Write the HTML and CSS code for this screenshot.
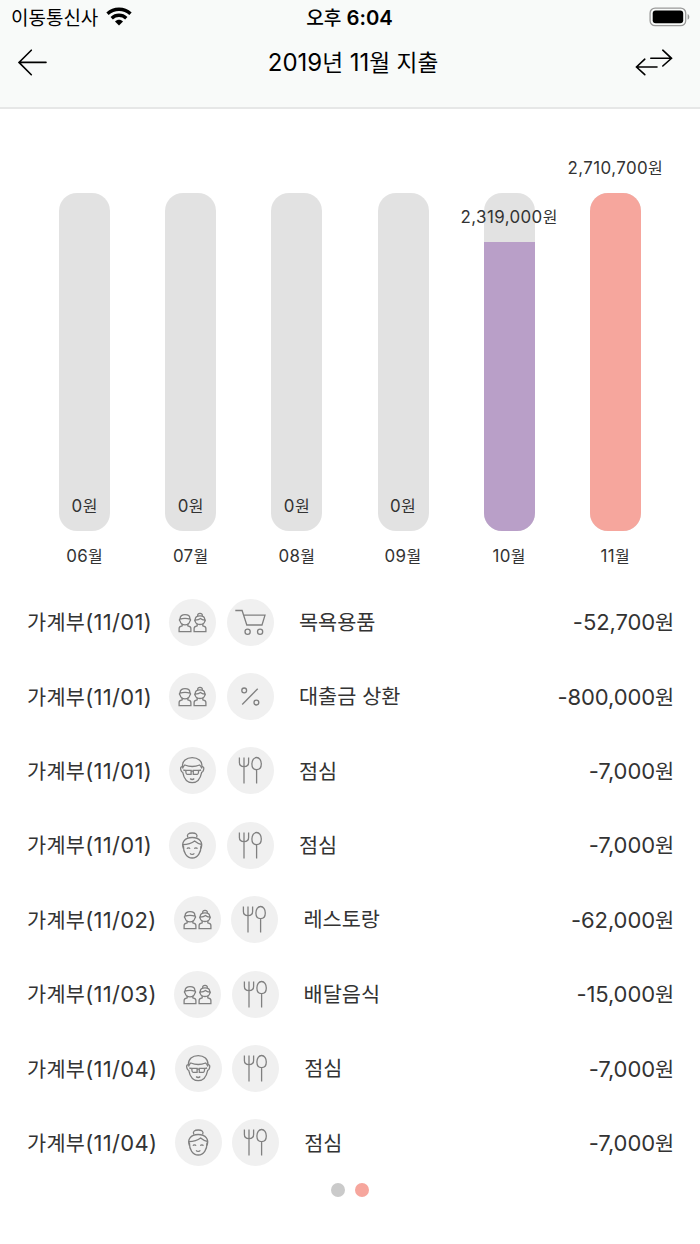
FILE: index.html
```html
<!DOCTYPE html>
<html lang="ko">
<head>
  <meta charset="UTF-8" />
  <meta name="viewport" content="width=device-width, initial-scale=1.0"/>
  <title>2019년 11월 지출</title>
  <link rel="stylesheet" href="styles.css">
</head>
<body>
  <!-- Shared icons -->
  <svg class="icon-defs" width="0" height="0">
    <symbol id="couple" viewBox="0 0 47 47">
      <path d="M11.100 19.900v-.5c0-2.400 2-3.700 4.900-3.700s4.900 1.300 4.900 3.700v.5c.9.300.9 1.900 0 2.200-.5 2.200-2.300 3.700-4.900 3.700s-4.400-1.500-4.900-3.700c-.9-.3-.9-1.900 0-2.200zM11.300 20.200c2-1 7.400-1 9.400 0"/>
      <path d="M13.200 24.700v2.100c-2.100.3-3.100 1-3.100 2.600v3.200h11.800v-3.200c0-1.600-1-2.300-3.100-2.600v-2.100"/>
      <path d="M26.200 20.700c0-2.500 2-3.800 4.800-3.800s4.800 1.300 4.800 3.800c.8.300.6 1.400 0 1.700-.5 2-2.300 3.100-4.800 3.100s-4.300-1.100-4.800-3.100c-.6-.3-.8-1.400 0-1.700zM26.300 21.200c2.600-.1 4.200-.8 5.200-1.700 1 .9 2.400 1.500 4.200 1.700"/>
      <path d="M28.800 17c-.5-1.600.4-2.600 2.200-2.600s2.700 1 2.200 2.600M28.200 24.700v2.100c-2.100.3-3.100 1-3.100 2.600v3.200h11.800v-3.200c0-1.600-1-2.300-3.100-2.600v-2.100"/>
    </symbol>
    <symbol id="cart" viewBox="0 0 47 47">
      <path d="M8.300 11.500h6.800L19.800 26H35l3-9.800H16.600"/>
      <circle cx="20.600" cy="32.700" r="2.600"/>
      <circle cx="33.100" cy="32.700" r="2.600"/>
    </symbol>
    <symbol id="percent" viewBox="0 0 47 47">
      <circle cx="17.200" cy="17.400" r="2.400"/>
      <circle cx="29.400" cy="29.600" r="2.400"/>
      <path d="M15.200 31.500l15.500-15.700"/>
    </symbol>
    <symbol id="man" viewBox="0 0 47 47">
      <path d="M13.400 20c-.3-6 4-9.400 9.800-9.400S33.300 14 33 20c1.700-.5 2.100 1 1.500 3-.4 1.400-1 2.300-1.800 2.400-1.200 6-4.700 10.300-9.500 10.300S14.900 31.400 13.700 25.400c-.8-.1-1.400-1-1.800-2.400-.6-2-.2-3.500 1.500-3z"/>
      <path d="M13.500 21.500c.5-1.500 1-2.700 2.300-3.500 4.500 1.800 10.300 1.800 14.800 0 1.300.8 1.800 2 2.300 3.500M14.300 23l2.500.6M32.100 23l-2.500.6"/>
      <path d="M16.800 23.300h5.300v4h-4c-1 0-1.300-1-1.300-4zM24.300 23.300h5.300c0 3-.3 4-1.300 4h-4zM22.100 24.200h2.200M21.200 31.500c1 1.300 3 1.300 4 0"/>
    </symbol>
    <symbol id="woman" viewBox="0 0 47 47">
      <path d="M18.800 15.500c-1.300-3 .6-4.500 4.400-4.500s5.700 1.500 4.400 4.500"/>
      <path d="M14.400 26.500c-2.200-5.800.9-11 8.800-11s11 5.200 8.800 11"/>
      <path d="M13.600 22.700c4.500-.1 9-1.200 12-3.700 2 1.700 4.500 3 7.200 3.500M14.400 23.500c-.2 7 3.300 12.500 8.800 12.500s9-5.500 8.800-12.500"/>
      <path d="M18 26.800c.5-1.200 2.500-1.200 3 0M25.400 26.800c.5-1.200 2.500-1.200 3 0M21.100 31.300c1 1.500 3.200 1.500 4.200 0"/>
    </symbol>
    <symbol id="meal" viewBox="0 0 47 47">
      <path d="M12.400 10.400v5.200c0 2.700 1.500 4.100 4.600 4.100s4.600-1.400 4.600-4.100v-5.200M17 10.400v26.200"/>
      <path d="M29.600 10.500c2.800 0 4.700 3 4.700 6.500s-1.900 5.600-4.700 5.600-4.700-2.100-4.700-5.600 1.900-6.500 4.700-6.500zM29.600 22.600v14"/>
    </symbol>
  </svg>

  <header class="header">
    <div class="status-bar">
      <div class="carrier">
        <span class="ko">이동통신사</span>
        <svg class="wifi" width="26" height="19" viewBox="0 0 26 19">
          <path d="M1.500 6.800C8 .7 18 .7 24.500 6.800M5.700 11.200c4.200-3.900 10.400-3.900 14.600 0" fill="none" stroke="#000" stroke-width="3.400"/>
          <path d="M9 14.500c2.300-2.200 5.700-2.200 8 0l-4 4z"/>
        </svg>
      </div>
      <div class="time"><span class="ko">오후</span> 6:04</div>
      <div class="battery">
        <svg width="42" height="20" viewBox="0 0 42 20">
          <rect x="1.100" y="1.100" width="35.600" height="17.600" rx="5" fill="none" stroke="#999" stroke-width="1.300"/>
          <rect x="3.700" y="3.600" width="30.500" height="12.700" rx="3"/>
          <path d="M38.600 7c2.300.8 2.300 5 0 5.800z" fill="#999"/>
        </svg>
      </div>
    </div>
    <div class="nav-bar">
      <svg class="nav-icon" width="30" height="28" viewBox="0 0 30 28">
        <path d="M14.300 1.200L2 13.400l12.300 12.300M2 13.400h27"/>
      </svg>
      <h1>2019<span class="ko">년</span> 11<span class="ko">월 지출</span></h1>
      <svg class="nav-icon" width="40" height="28" viewBox="0 0 40 28">
        <path d="M28.800 1.200l8.700 8.100-8.700 7.700M16.800 9.300h20.700M10.800 10.200l-8.300 7.800 8.300 7.700M2.500 18h20.500"/>
      </svg>
    </div>
  </header>

  <main>
    <section class="chart">
      <div class="month">
        <div class="bar"><span class="value">0<span class="ko">원</span></span></div>
        <div class="month-name">06<span class="ko">월</span></div>
      </div>
      <div class="month">
        <div class="bar"><span class="value">0<span class="ko">원</span></span></div>
        <div class="month-name">07<span class="ko">월</span></div>
      </div>
      <div class="month">
        <div class="bar"><span class="value">0<span class="ko">원</span></span></div>
        <div class="month-name">08<span class="ko">월</span></div>
      </div>
      <div class="month">
        <div class="bar"><span class="value">0<span class="ko">원</span></span></div>
        <div class="month-name">09<span class="ko">월</span></div>
      </div>
      <div class="month">
        <div class="bar"><span class="value">2,319,000<span class="ko">원</span></span><div class="fill october" style="height: 85.6%"></div></div>
        <div class="month-name">10<span class="ko">월</span></div>
      </div>
      <div class="month">
        <div class="bar"><span class="value">2,710,700<span class="ko">원</span></span><div class="fill november" style="height: 100%"></div></div>
        <div class="month-name">11<span class="ko">월</span></div>
      </div>
    </section>

    <ul class="expenses">
      <li>
        <span class="date"><span class="ko">가계부</span>(11/01)</span>
        <svg class="icon"><use href="#couple"/></svg>
        <svg class="icon"><use href="#cart"/></svg>
        <span class="name ko">목욕용품</span>
        <span class="amount">-52,700<span class="ko">원</span></span>
      </li>
      <li>
        <span class="date"><span class="ko">가계부</span>(11/01)</span>
        <svg class="icon"><use href="#couple"/></svg>
        <svg class="icon"><use href="#percent"/></svg>
        <span class="name ko">대출금 상환</span>
        <span class="amount">-800,000<span class="ko">원</span></span>
      </li>
      <li>
        <span class="date"><span class="ko">가계부</span>(11/01)</span>
        <svg class="icon"><use href="#man"/></svg>
        <svg class="icon"><use href="#meal"/></svg>
        <span class="name ko">점심</span>
        <span class="amount">-7,000<span class="ko">원</span></span>
      </li>
      <li>
        <span class="date"><span class="ko">가계부</span>(11/01)</span>
        <svg class="icon"><use href="#woman"/></svg>
        <svg class="icon"><use href="#meal"/></svg>
        <span class="name ko">점심</span>
        <span class="amount">-7,000<span class="ko">원</span></span>
      </li>
      <li>
        <span class="date"><span class="ko">가계부</span>(11/02)</span>
        <svg class="icon"><use href="#couple"/></svg>
        <svg class="icon"><use href="#meal"/></svg>
        <span class="name ko">레스토랑</span>
        <span class="amount">-62,000<span class="ko">원</span></span>
      </li>
      <li>
        <span class="date"><span class="ko">가계부</span>(11/03)</span>
        <svg class="icon"><use href="#couple"/></svg>
        <svg class="icon"><use href="#meal"/></svg>
        <span class="name ko">배달음식</span>
        <span class="amount">-15,000<span class="ko">원</span></span>
      </li>
      <li>
        <span class="date"><span class="ko">가계부</span>(11/04)</span>
        <svg class="icon"><use href="#man"/></svg>
        <svg class="icon"><use href="#meal"/></svg>
        <span class="name ko">점심</span>
        <span class="amount">-7,000<span class="ko">원</span></span>
      </li>
      <li>
        <span class="date"><span class="ko">가계부</span>(11/04)</span>
        <svg class="icon"><use href="#woman"/></svg>
        <svg class="icon"><use href="#meal"/></svg>
        <span class="name ko">점심</span>
        <span class="amount">-7,000<span class="ko">원</span></span>
      </li>
    </ul>

    <div class="pager">
      <span class="dot"></span>
      <span class="dot active"></span>
    </div>
  </main>
</body>
</html>
```
FILE: styles.css
```css
* {
  box-sizing: border-box;
  margin: 0;
  padding: 0;
}

body {
  background: #fff;
  color: #333;
  font-family: Inter, "Noto Sans CJK KR", sans-serif;
  font-weight: 380;
  height: 1244px;
  overflow: hidden;
}

/* Hangul runs a little smaller than the digits next to it */
.ko {
  font-family: "Noto Sans CJK KR", sans-serif;
  font-size: 0.945em;
  line-height: 1;
}

.icon-defs {
  display: block;
}

.header {
  height: 109px;
  background: #f8faf9;
  border-bottom: 2px solid #e6e7e7;
  color: #000;
}

.status-bar {
  display: grid;
  grid-template-columns: 1fr auto 1fr;
  align-items: center;
  height: 35px;
  padding: 0 9px 0 11px;
}

.carrier {
  display: flex;
  align-items: center;
  gap: 8px;
  margin-top: -2px;
  font-size: 20.1px;
}

.time {
  font-size: 20.3px;
  font-weight: 600;
  margin-right: 3px;
}

.time .ko {
  font-weight: 500;
}

.battery {
  display: flex;
  justify-content: flex-end;
}

.battery svg {
  margin-top: -1px;
}

.nav-bar {
  display: grid;
  grid-template-columns: 1fr auto 1fr;
  align-items: center;
  height: 55px;
  padding: 0 26px 0 17px;
}

.nav-bar h1 {
  margin-left: 15px;
  font-size: 24px;
  font-weight: 380;
}

.nav-icon {
  fill: none;
  stroke: #000;
  stroke-width: 1.6;
  stroke-linecap: round;
}

.nav-icon:last-child {
  justify-self: end;
}

.chart {
  display: grid;
  grid-template-columns: repeat(6, 1fr);
  padding: 84px 31.6px 0;
  font-size: 16.9px;
  letter-spacing: 0.4px;
}

.month {
  display: flex;
  flex-direction: column;
  align-items: center;
}

.bar {
  display: flex;
  flex-direction: column;
  justify-content: flex-end;
  align-items: center;
  width: 51px;
  height: 338px;
  border-radius: 18px;
  background: #e2e2e2;
}

.value {
  height: 20px;
  margin-bottom: 15px;
  line-height: 20px;
  white-space: nowrap;
}

.fill {
  flex-shrink: 0;
  width: 100%;
  border-radius: 0 0 18px 18px;
}

.october {
  background: #b99fc8;
}

.november {
  background: #f6a69d;
  border-radius: 18px;
}

.month-name {
  height: 24px;
  margin-top: 13px;
  line-height: 24px;
}

.expenses {
  list-style: none;
  padding: 17px 26px 0 27px;
  font-size: 22px;
}

.expenses li {
  display: flex;
  align-items: center;
  height: 74.4px;
}

.date {
  margin-right: 17.4px;
  letter-spacing: 0.3px;
}

.icon {
  width: 47px;
  height: 47px;
  margin-right: 10.5px;
  border-radius: 50%;
  background: #f0f0f0;
  fill: none;
  stroke: #808080;
  stroke-width: 1.3;
}

.name {
  margin-left: 14.5px;
  padding-bottom: 2px;
}

.amount {
  margin-left: auto;
  letter-spacing: -0.1px;
}

.pager {
  display: flex;
  justify-content: center;
  gap: 10px;
  margin-top: 3px;
}

.dot {
  width: 14px;
  height: 14px;
  border-radius: 50%;
  background: #cacaca;
}

.dot.active {
  background: #f6a69d;
}
```
